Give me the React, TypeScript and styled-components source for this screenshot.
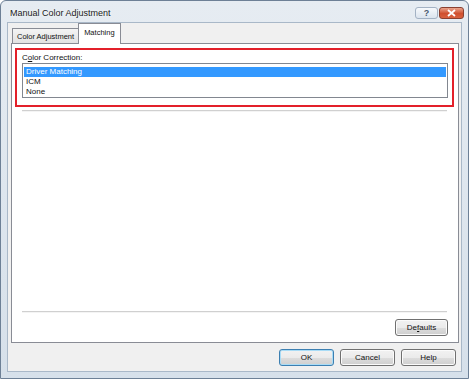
import styled, { createGlobalStyle, css } from "styled-components";

// ANCHOR --> GLOBAL
const GlobalStyle = createGlobalStyle`
  html, body {
    margin: 0;
    padding: 0;
    background: #ffffff;
  }
  body {
    font-family: "Liberation Sans", Arial, sans-serif;
  }
`
// END GLOBAL

const opcoes = ["Driver Matching", "ICM", "None"];

export default function App() {
  return (
    <>
      <GlobalStyle />
      <Window>
        <TitleBar>
          <Title>Manual Color Adjustment</Title>
          <Caption>
            <CaptionButton>?</CaptionButton>
            <CaptionButton $close>
              <svg width="9" height="8" viewBox="0 0 9 8">
                <path d="M1 1 L8 7 M8 1 L1 7" stroke="#fff" strokeWidth="1.8" />
              </svg>
            </CaptionButton>
          </Caption>
        </TitleBar>

        <Client>
          <Tabs>
            <Tab>Color Adjustment</Tab>
            <Tab $active>Matching</Tab>
          </Tabs>

          <Panel>
            <Highlight>
              <Label>C<u>o</u>lor Correction:</Label>
              <ListBox>
                {opcoes.map((op, i) => (
                  <Item key={op} $selected={i === 0}>{op}</Item>
                ))}
              </ListBox>
            </Highlight>
            <Rule />
            <Space />
            <Rule />
            <DefaultsRow>
              <Button $width={53}>De<u>f</u>aults</Button>
            </DefaultsRow>
          </Panel>

          <Footer>
            <Button $default>OK</Button>
            <Button>Cancel</Button>
            <Button>Help</Button>
          </Footer>
        </Client>
      </Window>
    </>
  )
}

const Window = styled.div`
  width: 467px;
  height: 377px;
  border: 1px solid #6d8096;
  border-radius: 6px 6px 0 0;
  background: linear-gradient(#e6ecf2, #d6e0ea);
  display: flex;
  flex-direction: column;
  box-sizing: content-box;
`
const TitleBar = styled.div`
  height: 21px;
  display: flex;
  align-items: center;
  justify-content: space-between;
  padding: 0 4px 0 9px;
`
const Title = styled.span`
  font-size: 9px;
  color: #1a1a1a;
  text-shadow: 0 0 3px #ffffff;
  margin-top: 2px;
`
const Caption = styled.div`
  display: flex;
  gap: 1px;
  align-self: flex-start;
  margin-top: 6px;
`
const CaptionButton = styled.div<{ $close?: boolean }>`
  width: 23px;
  height: 12px;
  box-sizing: border-box;
  border: 1px solid #a3b2c4;
  border-radius: 3px;
  display: flex;
  align-items: center;
  justify-content: center;
  font-size: 9px;
  font-weight: bold;
  color: #4a5a6e;
  background: linear-gradient(#f6f9fc, #dbe4ee);
  ${p => p.$close && css`
    width: 25px;
    border-color: #8a4030;
    background: linear-gradient(#eaa48c, #d0502f 55%, #d9613f);
  `}
`
const Client = styled.div`
  flex: 1;
  margin: 0 6px 6px 6px;
  border: 1px solid #a9b8c8;
  background: #f0f0f0;
  padding: 0 2px 0 3px;
  display: flex;
  flex-direction: column;
`
const Tabs = styled.div`
  display: flex;
  align-items: flex-end;
  padding-left: 1px;
  height: 20px;
  position: relative;
  z-index: 1;
`
const Tab = styled.div<{ $active?: boolean }>`
  height: 15px;
  box-sizing: border-box;
  padding: 0 4px;
  font-size: 7.5px;
  display: flex;
  align-items: center;
  color: #111;
  border: 1px solid #898c95;
  border-bottom: none;
  background: linear-gradient(#f4f4f4, #e2e2e2);
  ${p => p.$active && css`
    height: 21px;
    margin-bottom: -1px;
    margin-left: -1px;
    padding: 0 5px 3px 5px;
    background: #ffffff;
    border-color: #898c95;
  `}
`
const Panel = styled.div`
  width: 448px;
  height: 300px;
  box-sizing: border-box;
  border: 1px solid #898c95;
  background: #ffffff;
  padding: 4px 4px 0 3px;
  display: flex;
  flex-direction: column;
`
const Highlight = styled.div`
  height: 59px;
  box-sizing: border-box;
  border: 2px solid #e3202a;
  padding: 3px 4px 0 5px;
  display: flex;
  flex-direction: column;
`
const Label = styled.div`
  font-size: 8px;
  line-height: 10px;
  color: #111;
`
const ListBox = styled.div`
  height: 35px;
  box-sizing: border-box;
  border: 1px solid #828790;
  padding: 3px 1px 0 1px;
`
const Item = styled.div<{ $selected?: boolean }>`
  height: 10px;
  line-height: 10px;
  font-size: 8px;
  padding-left: 2px;
  color: ${p => (p.$selected ? "#ffffff" : "#111")};
  background: ${p => (p.$selected ? "#3399ff" : "transparent")};
`
const Rule = styled.div`
  margin: 3px 0 0 7px;
  width: 425px;
  height: 1px;
  background: #d0d0d0;
  border-bottom: 1px solid #f4f4f4;
`
const Space = styled.div`
  height: 196px;
`
const DefaultsRow = styled.div`
  display: flex;
  justify-content: flex-end;
  padding-right: 6px;
  margin-top: 6px;
`
const Button = styled.div<{ $width?: number; $default?: boolean }>`
  width: ${p => p.$width ?? 55}px;
  height: 17px;
  box-sizing: border-box;
  border: 1px solid #707070;
  border-radius: 3px;
  background: linear-gradient(#f2f2f2 0%, #ebebeb 50%, #dddddd 51%, #cfcfcf 100%);
  font-size: 8px;
  color: #111;
  display: flex;
  align-items: center;
  justify-content: center;
  box-shadow: inset 0 0 0 1px #fbfbfb;
  ${p => p.$default && css`
    border-color: #3c7fb1;
    box-shadow: inset 0 0 0 1px #a9dcf6;
  `}
`
const Footer = styled.div`
  display: flex;
  justify-content: flex-end;
  gap: 6px;
  padding: 6px 3px 0 0;
`
